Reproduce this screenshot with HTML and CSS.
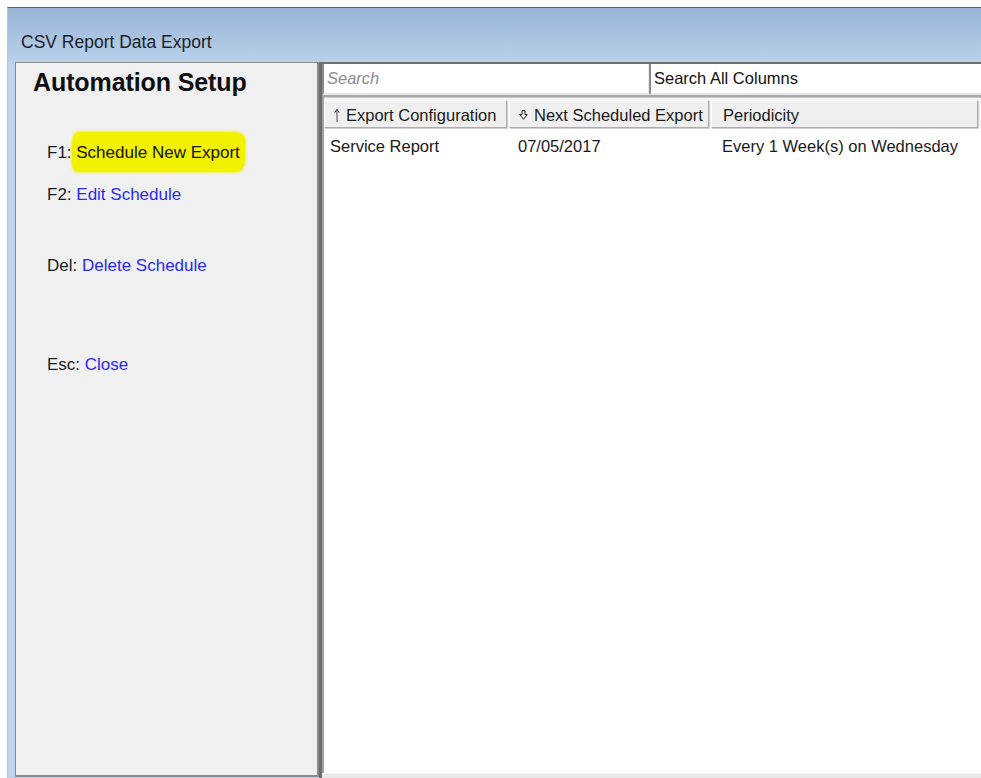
FILE: index.html
```html
<!DOCTYPE html>
<html lang="en">
<head>
<meta charset="utf-8">
<title>CSV Report Data Export</title>
<link rel="stylesheet" href="styles.css">
</head>
<body>
<div class="window">
  <div class="titlebar">CSV Report Data Export</div>
  <div class="frame">
    <aside class="sidebar">
      <h1 class="sidebar-title">Automation Setup</h1>
      <ul class="actions">
        <li class="action"><span class="key">F1:</span><span class="hl"> Schedule New Export</span></li>
        <li class="action"><span class="key">F2:</span> <a class="link" href="#">Edit Schedule</a></li>
        <li class="action action-del"><span class="key">Del:</span> <a class="link" href="#">Delete Schedule</a></li>
        <li class="action action-esc"><span class="key">Esc:</span> <a class="link" href="#">Close</a></li>
      </ul>
    </aside>
    <div class="splitter"></div>
    <section class="main">
      <div class="searchbar">
        <div class="field field-search"><span class="placeholder">Search</span></div>
        <div class="field field-scope">Search All Columns</div>
      </div>
      <div class="grid">
        <div class="grid-head">
          <div class="col-head">
            <svg class="sort-icon" width="6" height="14" viewBox="0 0 6 14"><path d="M3 2 L3 14" stroke="#5a3c48" stroke-width="1"/><path d="M0.8 4.6 L3 1.2 L5.2 4.6" fill="none" stroke="#2c2c38" stroke-width="1"/></svg>
            Export Configuration
          </div>
          <div class="col-head">
            <svg class="sort-icon" width="9" height="10" viewBox="0 0 9 10"><path d="M3 0.5 H6 V4.5 H8.2 L4.5 9.3 L0.8 4.5 H3 Z" fill="none" stroke="#2a2a2a" stroke-width="1"/></svg>
            Next Scheduled Export
          </div>
          <div class="col-head">Periodicity</div>
        </div>
        <div class="grid-row">
          <div class="cell">Service Report</div>
          <div class="cell">07/05/2017</div>
          <div class="cell">Every 1 Week(s) on Wednesday</div>
        </div>
      </div>
      <div class="hscroll"></div>
    </section>
  </div>
</div>
</body>
</html>
```

FILE: styles.css
```css
html, body {
  margin: 0;
  padding: 0;
  background: #ffffff;
}

body {
  font-family: "Liberation Sans", Arial, sans-serif;
  color: #1a1a1a;
  overflow: hidden;
}

.window {
  margin: 7px 0 0 7px;
  height: 771px;
  border-top: 1px solid #5f6266;
  border-left: 1px solid #b7c3d0;
  display: flex;
  flex-direction: column;
  box-sizing: border-box;
}

.titlebar {
  height: 54px;
  box-sizing: border-box;
  padding: 23px 0 0 13px;
  line-height: 22px;
  font-size: 17.5px;
  color: #1c1e28;
  background: linear-gradient(#97b4d6, #b9d0ea);
  flex: none;
}

.frame {
  flex: 1;
  display: flex;
  padding-left: 7px;
  background: #bdd4ec;
  min-height: 0;
}

/* left command panel */
.sidebar {
  width: 304px;
  flex: none;
  box-sizing: border-box;
  background: #f0f0f0;
  border-top: 1px solid #8a8a8a;
  border-left: 1px solid #8a8a8a;
  border-bottom: 2px solid #8a8a8a;
  border-right: 2px solid #8d8d8d;
  margin-bottom: 1px;
  padding: 5px 0 0 17px;
}

.sidebar-title {
  margin: 0;
  font-size: 25px;
  line-height: 28px;
  font-weight: bold;
  color: #0f0f0f;
  letter-spacing: -0.1px;
}

.actions {
  list-style: none;
  margin: 46px 0 0 14px;
  padding: 0;
  display: flex;
  flex-direction: column;
  gap: 20px;
  font-size: 17px;
  line-height: 22px;
}

.action-del {
  margin-top: 29px;
}

.action-esc {
  margin-top: 57px;
}

.key {
  color: #1a1a1a;
}

.link {
  color: #2a2af0;
  text-decoration: none;
}

/* marker-pen highlight around the first command */
.hl {
  color: #141400;
  background: #f2f200;
  padding: 11px 5px 10px 0;
  border-radius: 6px 12px 9px 5px / 12px 7px 12px 9px;
  box-shadow: 0 0 2px 1px rgba(242, 242, 0, 0.7);
}

.splitter {
  width: 3px;
  flex: none;
  background: #6c6c6c;
}

/* right data area */
.main {
  flex: 1;
  display: flex;
  flex-direction: column;
  background: #ffffff;
  min-width: 0;
}

.searchbar {
  display: flex;
  height: 35px;
  flex: none;
  background: #f0f0f0;
  box-sizing: border-box;
  border-top: 2px solid #6f6f6f;
  border-bottom: 2px solid #a8a8a8;
}

.field {
  background: #ffffff;
  box-sizing: border-box;
  font-size: 16.5px;
  line-height: 26px;
  border-left: 2px solid #8a8a8a;
  border-bottom: 2px solid #e6e6e6;
  padding: 1px 0 0 3px;
  height: 31px;
}

.field-search {
  width: 326px;
  margin-right: 1px;
}

.placeholder {
  color: #8c8c96;
  font-style: italic;
}

.field-scope {
  flex: 1;
  color: #111111;
}

.grid {
  flex: 1;
  display: flex;
  flex-direction: column;
  border-left: 2px solid #a0a0a0;
}

.grid-head,
.grid-row {
  display: grid;
  grid-template-columns: 183px 200px 267px;
  column-gap: 2px;
}

.grid-head {
  height: 31px;
  background: #f4f4f4;
  border-top: 1px solid #c8c8c8;
  padding-top: 2px;
  box-sizing: border-box;
}

.col-head {
  display: flex;
  align-items: center;
  gap: 6px;
  padding: 2px 0 0 9px;
  font-size: 16.5px;
  color: #1a1a1a;
  background: #efefef;
  border: 1px solid #acacac;
  border-top-color: #ffffff;
  border-left-color: #ffffff;
  box-shadow: 1px 1px 0 #d0d0d0;
  box-sizing: border-box;
}

.col-head:last-child {
  padding-left: 11px;
}

.sort-icon {
  flex: none;
}

.grid-row {
  font-size: 16.5px;
  line-height: 20px;
  padding-top: 8px;
}

.cell {
  padding-left: 6px;
}

.cell:nth-child(2) {
  padding-left: 9px;
}

.cell:nth-child(3) {
  padding-left: 11px;
}

.hscroll {
  height: 4px;
  flex: none;
  background: #e8e8e8;
  border-top: 1px solid #f3f3f3;
}
```
